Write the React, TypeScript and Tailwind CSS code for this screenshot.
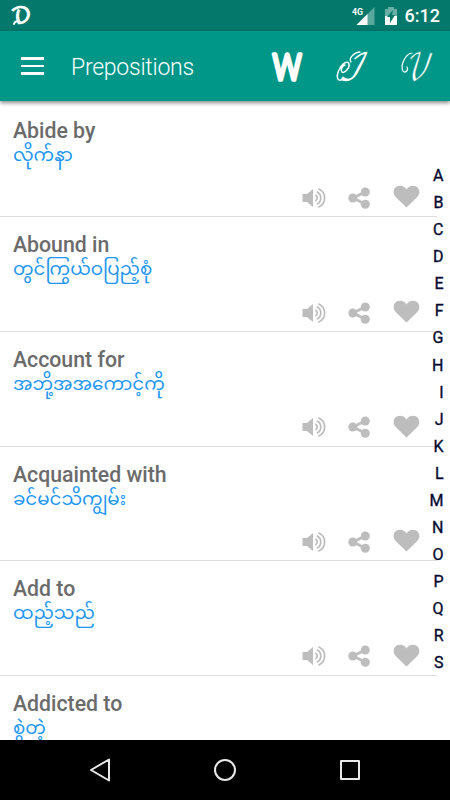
import React from 'react';

interface Entry {
  phrase: string;
  meaning: string;
}

const entries: Entry[] = [
  { phrase: 'Abide by', meaning: 'လိုက်နာ' },
  { phrase: 'Abound in', meaning: 'တွင်ကြွယ်ဝပြည့်စုံ' },
  { phrase: 'Account for', meaning: 'အဘို့အအကောင့်ကို' },
  { phrase: 'Acquainted with', meaning: 'ခင်မင်သိကျွမ်း' },
  { phrase: 'Add to', meaning: 'ထည့်သည်' },
  { phrase: 'Addicted to', meaning: 'စွဲတဲ့' },
];

const letters = 'ABCDEFGHIJKLMNOPQRS'.split('');

const StatusBar: React.FC = () => (
  <div className="h-[31px] shrink-0 bg-[#03786b] flex items-center text-white">
    <svg className="ml-[10px]" width="26" height="31" viewBox="10 0 26 31" fill="none" stroke="white" strokeLinecap="round">
      <text x="0" y="0" transform="translate(13.5 23) skewX(14) scale(.95 .95)" fontSize="23" fontFamily="'DejaVu Math TeX Gyre', serif" fill="white" strokeWidth="1.2">𝒟</text>
      <path d="M20 22c-3-1.500-5.500-.5-6 2" strokeWidth="2" />
    </svg>
    <svg className="ml-auto" width="90" height="31" viewBox="0 0 90 31">
      <text x="1" y="15" fontSize="9.5" fontWeight="700" fontFamily="Roboto, sans-serif" textLength="11" lengthAdjust="spacingAndGlyphs" fill="white">4G</text>
      <path d="M23.5 7v18h-18z" fill="white" opacity=".35" />
      <path d="M16.5 14v11h-11z" fill="white" />
      <path d="M34 9h3V7h6v2h3v7H34z" fill="white" opacity=".4" />
      <path d="M34 16h12v9H34z" fill="white" />
      <path d="M42 10l-6 7h3v6l5-8h-3z" fill="#03786b" />
    </svg>
    <span className="-ml-[36px] mr-[10px] pt-[1px] text-[18px] leading-[30px] font-medium">6:12</span>
  </div>
);

const Toolbar: React.FC = () => (
  <header className="h-[70px] shrink-0 bg-[#009688] flex items-center text-white shadow-[0_2px_4px_rgba(0,0,0,0.45)] relative z-10">
    <button className="ml-[21px] w-[23px] flex flex-col gap-[5px]" aria-label="Menu">
      <span className="h-[2.5px] w-full bg-white" />
      <span className="h-[2.5px] w-full bg-white" />
      <span className="h-[2.5px] w-full bg-white" />
    </button>
    <h1 className="ml-[27px] pt-[4px] text-[23px] leading-[30px] font-light tracking-[-0.25px]">Prepositions</h1>
    <svg className="ml-auto mr-[12px]" width="170" height="50" viewBox="268 41 170 50" fill="white">
      <text x="0" y="0" transform="translate(272.500 79.500) scale(.76 1)" fontSize="37" fontWeight="400" fontFamily="Lato, sans-serif" stroke="white" strokeWidth="3.400" strokeLinejoin="round">W</text>
      <text x="0" y="0" transform="translate(338 80) skewX(-18) scale(.85 1)" fontSize="37" fontFamily="'DejaVu Math TeX Gyre', serif">ℐ</text>
      <path d="M343 79c-6 4-7-3-4-9 3-7 9-10 10-6 1 4-5 10-7 8-2-2 0-6 3-7" fill="none" stroke="white" strokeWidth="1.5" strokeLinecap="round" />
      <path d="M351 62c-3-4 4-10 9-10" fill="none" stroke="white" strokeWidth="1.3" strokeLinecap="round" />
      <text x="0" y="0" transform="translate(404 80) skewX(-10) scale(.72 1)" fontSize="37" fontFamily="'DejaVu Math TeX Gyre', serif" stroke="#009688" strokeWidth=".5">𝒱</text>
      <path d="M412 53c-7 1-12 13-9 18 2 3 6-1 4-4" fill="none" stroke="white" strokeWidth="1.2" strokeLinecap="round" />
    </svg>
  </header>
);

const EntryActions: React.FC = () => (
  <div className="mt-auto flex items-center justify-end h-[24px] mr-[17.5px] mb-[6.5px] text-[#bdbdbd]">
    <svg width="24" height="22" viewBox="0 0 24 22" fill="none" stroke="currentColor" strokeWidth="1.7">
      <path d="M.5 7h4.500l6-5v18L5 15H.5z" fill="currentColor" stroke="none" />
      <path d="M13.3 8a3.3 3.3 0 0 1 0 6M14.8 4.8a6.8 6.8 0 0 1 0 12.4M16.3 1.7a10 10 0 0 1 0 18.6" />
    </svg>
    <svg className="ml-[21px]" width="24" height="24" viewBox="0 0 24 24" fill="currentColor">
      <path d="M18 6L6 12l12 6" fill="none" stroke="currentColor" strokeWidth="2.8" />
      <circle cx="18.3" cy="6" r="4.5" />
      <circle cx="5.8" cy="12" r="4.5" />
      <circle cx="18.3" cy="18.3" r="4.500" />
    </svg>
    <svg className="ml-[22px] mb-[1px]" width="27" height="24" viewBox="0 0 27 24" fill="currentColor">
      <path d="M13.5 22.5L3.2 12.6C-1.8 7.5 1.1.7 7 .7c3 0 5.2 1.7 6.5 3.8C14.8 2.4 17 .7 20 .7c5.9 0 8.8 6.8 3.8 11.9z" />
    </svg>
  </div>
);

const EntryRow: React.FC<{ entry: Entry }> = ({ entry }) => (
  <li className="h-[114.6px] shrink-0 flex flex-col border-b border-[#dedede]">
    <div className="pl-[13px] pt-[13px]">
      <h2 className="text-[22.5px] leading-[28px] font-medium text-[#6b6b6b] origin-left scale-x-[0.945]">{entry.phrase}</h2>
      <p className="pt-[2px] text-[18.3px] leading-[22px] text-[#2196f3] whitespace-nowrap font-['Noto_Sans_Myanmar','Noto_Sans',sans-serif]">{entry.meaning}</p>
    </div>
    <EntryActions />
  </li>
);

const NavigationBar: React.FC = () => (
  <nav className="h-[60px] shrink-0 bg-black flex items-center justify-between px-[88px]">
    <svg width="24" height="26" viewBox="0 0 24 26" fill="none" stroke="#e8e8e8" strokeWidth="2" strokeLinejoin="round">
      <path d="M21 2.5v21L3 13z" />
    </svg>
    <svg width="24" height="24" viewBox="0 0 24 24" fill="none" stroke="#e8e8e8" strokeWidth="2">
      <circle cx="12" cy="12" r="10" />
    </svg>
    <svg width="24" height="24" viewBox="0 0 24 24" fill="none" stroke="#e8e8e8" strokeWidth="2" strokeLinejoin="round">
      <rect x="3" y="3" width="18" height="18" />
    </svg>
  </nav>
);

export default function App() {
  return (
    <div className="w-[450px] h-[800px] flex flex-col overflow-hidden bg-white font-[Roboto,sans-serif]">
      <StatusBar />
      <Toolbar />
      <main className="relative flex-1 min-h-0 overflow-hidden pt-[1.9px]">
        <ul className="w-[437px] flex flex-col">
          {entries.map((entry) => (
            <EntryRow key={entry.phrase} entry={entry} />
          ))}
        </ul>
        <div className="absolute right-[6.5px] top-[61px] flex flex-col items-end text-[16px] font-normal text-[#050a30] [-webkit-text-stroke:0.35px_#050a30]">
          {letters.map((letter) => (
            <span key={letter} className="h-[27.08px] leading-[27px]">{letter}</span>
          ))}
        </div>
      </main>
      <NavigationBar />
    </div>
  );
}
